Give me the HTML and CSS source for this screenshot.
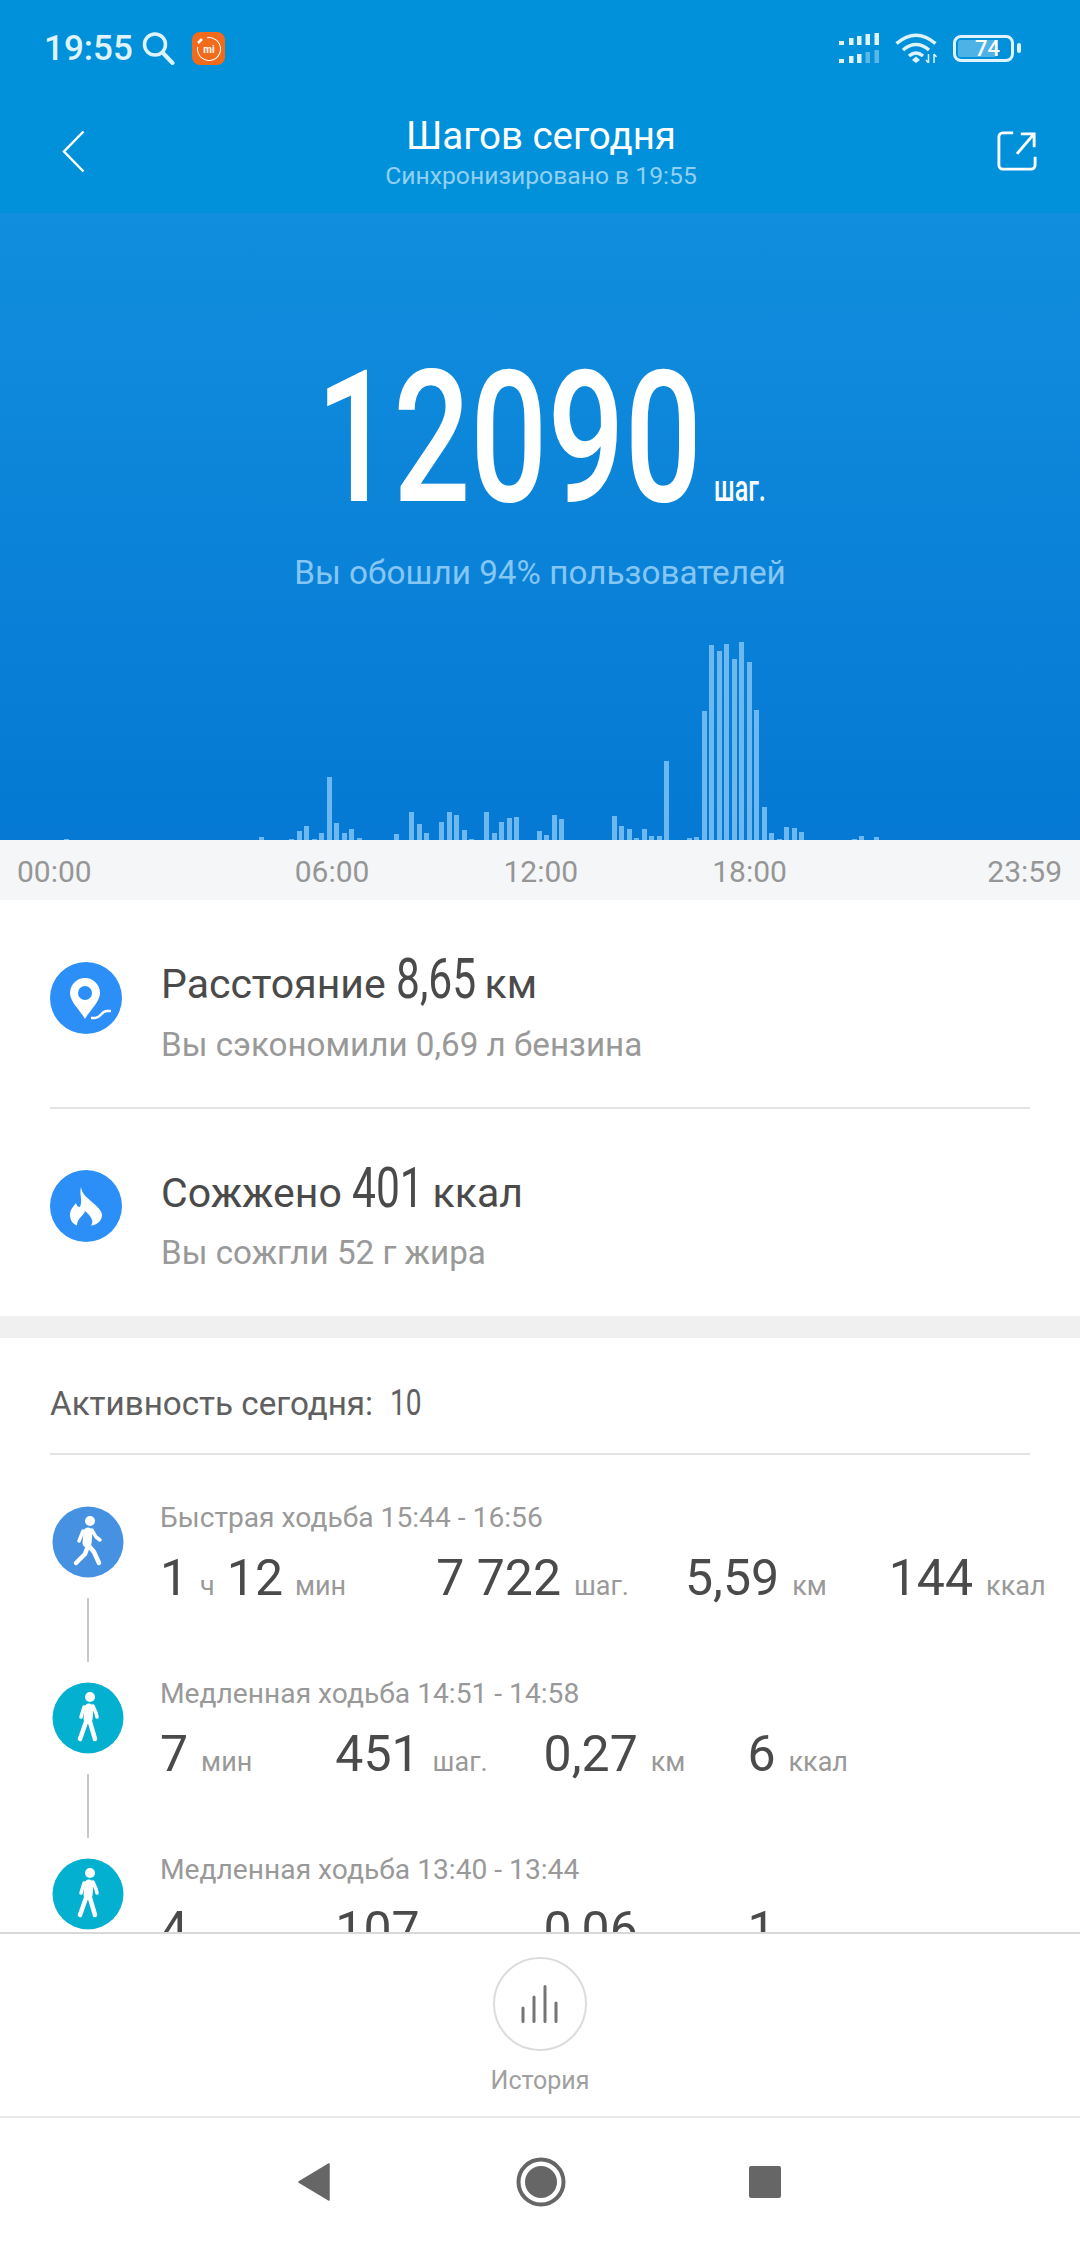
FILE: index.html
```html
<!DOCTYPE html>
<html lang="ru">
<head>
    <meta charset="UTF-8">
    <title>Шагов сегодня</title>
    <link rel="stylesheet" href="styles.css">
</head>
<body>
    <div class="top">
        <div class="status">
            <span class="clock">19:55</span>
            <svg class="search" width="33" height="33" viewBox="0 0 33 33"><circle cx="13" cy="12.500" r="10.500" fill="none" stroke="#dff3fe" stroke-width="3.500"/><path d="M21 21l9.500 10" stroke="#dff3fe" stroke-width="4" stroke-linecap="round"/></svg>
            <svg class="mi" width="33" height="33" viewBox="0 0 33 33"><rect width="33" height="33" rx="8" fill="#f26a1b"/><circle cx="17" cy="17" r="11.500" fill="none" stroke="#fff" stroke-width="1" stroke-dasharray="58 14" transform="rotate(-100 17 17)"/><path d="M6 11l4-4" stroke="#fff" stroke-width="2.500"/><text class="mi-text" x="17" y="20.500" text-anchor="middle">mi</text></svg>
            <span class="spacer"></span>
            <svg class="signal" width="40" height="30" viewBox="0 0 40 30"><g fill="#dff3fe"><rect x="0" y="8" width="5" height="4"/><rect x="10" y="5" width="4.500" height="7"/><rect x="18" y="3" width="4.500" height="9"/><rect x="26.500" y="1" width="4.500" height="11"/><rect x="35.500" y="0" width="4.500" height="12"/><rect x="0" y="26" width="5" height="4"/><rect x="10" y="23" width="4.500" height="7"/><rect x="18" y="21" width="4.500" height="9"/></g><g fill="#dff3fe" opacity=".4"><rect x="26.500" y="19" width="4.500" height="11"/><rect x="35.500" y="17" width="4.500" height="13"/></g></svg>
            <svg class="wifi" width="43" height="30" viewBox="0 0 43 30"><path d="M1.500 10.500Q21 -6 40.500 10.500M8 17Q21 6 34 17M14 23Q21 17 28 23" fill="none" stroke="#dff3fe" stroke-width="3.500"/><path d="M21 23.500l4 3.500-4 3-4-3z" fill="#dff3fe"/><path d="M33.500 21v9M39 21v9M31 27l2.500 3M41.500 24l-2.500-3" fill="none" stroke="#dff3fe" stroke-width="1.500"/></svg>
            <div class="battery"><div class="battery-level"></div><span>74</span></div>
            <div class="battery-cap"></div>
        </div>
        <div class="titlebar">
            <svg class="title-icon" width="24" height="43" viewBox="0 0 24 43"><path d="M22.500 1.500L3 21.500l19.500 20" fill="none" stroke="#fff" stroke-width="2.500"/></svg>
            <div class="title-text">
                <div class="title">Шагов сегодня</div>
                <div class="subtitle">Синхронизировано в 19:55</div>
            </div>
            <svg class="title-icon" width="40" height="40" viewBox="0 0 42 42"><path d="M17 2H6a4 4 0 0 0-4 4v30a4 4 0 0 0 4 4h30a4 4 0 0 0 4-4v-9M21 24L38 4M25 3h14v14" fill="none" stroke="#fff" stroke-width="3"/></svg>
        </div>
    </div>

    <div class="hero">
        <div class="steps"><span class="steps-num">12090</span><span class="steps-unit">шаг.</span></div>
        <div class="hero-note">Вы обошли 94% пользователей</div>
        <div class="chart">
            <i style="grid-column:10;height:1px"></i><i style="grid-column:36;height:3px"></i><i style="grid-column:40;height:1px"></i><i style="grid-column:41;height:9px"></i><i style="grid-column:42;height:14px"></i><i style="grid-column:43;height:1px"></i><i style="grid-column:44;height:7px"></i><i style="grid-column:45;height:63px"></i><i style="grid-column:46;height:17px"></i><i style="grid-column:47;height:7px"></i><i style="grid-column:48;height:11px"></i><i style="grid-column:49;height:2px"></i>
            <i style="grid-column:54;height:6px"></i><i style="grid-column:56;height:28px"></i><i style="grid-column:57;height:16px"></i><i style="grid-column:58;height:7px"></i><i style="grid-column:60;height:18px"></i><i style="grid-column:61;height:28px"></i><i style="grid-column:62;height:25px"></i><i style="grid-column:63;height:10px"></i><i style="grid-column:64;height:1px"></i><i style="grid-column:66;height:28px"></i><i style="grid-column:67;height:7px"></i><i style="grid-column:68;height:18px"></i><i style="grid-column:69;height:22px"></i><i style="grid-column:70;height:23px"></i>
            <i style="grid-column:73;height:9px"></i><i style="grid-column:74;height:5px"></i><i style="grid-column:75;height:25px"></i><i style="grid-column:76;height:21px"></i><i style="grid-column:83;height:24px"></i><i style="grid-column:84;height:14px"></i><i style="grid-column:85;height:11px"></i><i style="grid-column:86;height:2px"></i><i style="grid-column:87;height:11px"></i><i style="grid-column:88;height:4px"></i><i style="grid-column:89;height:4px"></i><i style="grid-column:90;height:79px"></i>
            <i style="grid-column:93;height:2px"></i><i style="grid-column:94;height:3px"></i><i style="grid-column:95;height:129px"></i><i style="grid-column:96;height:195px"></i><i style="grid-column:97;height:189px"></i><i style="grid-column:98;height:196px"></i><i style="grid-column:99;height:181px"></i><i style="grid-column:100;height:198px"></i><i style="grid-column:101;height:178px"></i><i style="grid-column:102;height:130px"></i><i style="grid-column:103;height:33px"></i><i style="grid-column:104;height:7px"></i><i style="grid-column:105;height:1px"></i><i style="grid-column:106;height:13px"></i><i style="grid-column:107;height:12px"></i><i style="grid-column:108;height:8px"></i>
            <i style="grid-column:115;height:1px"></i><i style="grid-column:116;height:4px"></i><i style="grid-column:118;height:3px"></i>
        </div>
    </div>

    <div class="axis">
        <span>00:00</span>
        <span class="axis-06">06:00</span>
        <span class="axis-mid">12:00</span>
        <span class="axis-mid">18:00</span>
        <span class="axis-end">23:59</span>
    </div>

    <div class="summary">
        <div class="sum-row">
            <svg class="sum-icon" width="72" height="72" viewBox="0 0 72 72"><circle cx="36" cy="36" r="36" fill="#2b8ff7"/><path fill-rule="evenodd" d="M35 16a15 15 0 0 0-15 15c0 9 10 17 15 26 5-9 15-17 15-26a15 15 0 0 0-15-15zm0 8a7 7 0 1 1 0 14 7 7 0 0 1 0-14z" fill="#fff"/><path d="M41 56h4c6 0 6-7 12-7h4" fill="none" stroke="#fff" stroke-width="2.500"/></svg>
            <div class="sum-text">
                <div class="sum-title">Расстояние <span class="sum-num num-dist">8,65</span> км</div>
                <div class="sum-note">Вы сэкономили 0,69 л бензина</div>
            </div>
        </div>
        <div class="sum-row sum-row-last">
            <svg class="sum-icon" width="72" height="72" viewBox="0 0 72 72"><circle cx="36" cy="36" r="36" fill="#2b8ff7"/><path d="M31 17C32 25 38 28 43 33 49 38 52 42 52 45 52 51 47 55 41 55.500 44 52 42 47 35 41 34 46 27 48 27 55.500 22 54 20 49 20 45 20 39 24 36 26 33 27 36 28 37 30 37 33 30 29 24 31 17z" fill="#fff"/></svg>
            <div class="sum-text">
                <div class="sum-title">Сожжено <span class="sum-num num-kcal">401</span> ккал</div>
                <div class="sum-note">Вы сожгли 52 г жира</div>
            </div>
        </div>
    </div>

    <div class="gap"></div>

    <div class="activity">
        <div class="act-head">Активность сегодня: &nbsp;<span class="act-count">10</span></div>

        <div class="act-list">
            <div class="act-item">
                <div class="act-side">
                    <svg width="72" height="72" viewBox="0 0 72 72"><circle cx="36" cy="36" r="35.500" fill="#4791e3"/><circle cx="38" cy="15" r="5" fill="#fff"/><g fill="none" stroke="#fff" stroke-linecap="round" stroke-linejoin="round"><path d="M36 26l-1 11" stroke-width="9"/><path d="M40 24l4 7 4 3M31 25l-4 10" stroke-width="3.500"/><path d="M36 40l-3 8-9 9M37 40l5 6 5 11" stroke-width="4.500"/></g></svg>
                    <div class="act-line"></div>
                </div>
                <div class="act-body">
                    <div class="act-label">Быстрая ходьба 15:44 - 16:56</div>
                    <div class="act-stats">
                        <div class="stat stat-time"><b>1</b><small>ч</small><b>12</b><small>мин</small></div>
                        <div class="stat stat-b"><b>7 722</b><small>шаг.</small></div>
                        <div class="stat"><b>5,59</b><small>км</small></div>
                        <div class="stat"><b>144</b><small>ккал</small></div>
                    </div>
                </div>
            </div>
            <div class="act-item">
                <div class="act-side">
                    <svg width="72" height="72" viewBox="0 0 72 72"><circle cx="36" cy="36" r="35.500" fill="#04b0cf"/><circle cx="38" cy="15" r="5" fill="#fff"/><g fill="none" stroke="#fff" stroke-linecap="round" stroke-linejoin="round"><path d="M37 26l-1 11" stroke-width="9"/><path d="M41 24l3 7 1 4M32 25l-3 10" stroke-width="3.500"/><path d="M34 40l-6 17M38 40l5 17" stroke-width="4.500"/></g></svg>
                    <div class="act-line"></div>
                </div>
                <div class="act-body">
                    <div class="act-label">Медленная ходьба 14:51 - 14:58</div>
                    <div class="act-stats">
                        <div class="stat stat-a"><b>7</b><small>мин</small></div>
                        <div class="stat stat-b"><b>451</b><small>шаг.</small></div>
                        <div class="stat"><b>0,27</b><small>км</small></div>
                        <div class="stat"><b>6</b><small>ккал</small></div>
                    </div>
                </div>
            </div>
            <div class="act-item">
                <div class="act-side">
                    <svg width="72" height="72" viewBox="0 0 72 72"><circle cx="36" cy="36" r="35.500" fill="#04b0cf"/><circle cx="38" cy="15" r="5" fill="#fff"/><g fill="none" stroke="#fff" stroke-linecap="round" stroke-linejoin="round"><path d="M37 26l-1 11" stroke-width="9"/><path d="M41 24l3 7 1 4M32 25l-3 10" stroke-width="3.500"/><path d="M34 40l-6 17M38 40l5 17" stroke-width="4.500"/></g></svg>
                </div>
                <div class="act-body">
                    <div class="act-label">Медленная ходьба 13:40 - 13:44</div>
                    <div class="act-stats">
                        <div class="stat stat-a"><b>4</b><small>мин</small></div>
                        <div class="stat stat-b"><b>107</b><small>шаг.</small></div>
                        <div class="stat"><b>0,06</b><small>км</small></div>
                        <div class="stat"><b>1</b><small>ккал</small></div>
                    </div>
                </div>
            </div>
        </div>
    </div>

    <div class="bottom">
        <div class="history-btn">
            <svg width="40" height="38" viewBox="0 0 40 38"><path d="M3 36.500V23M14 36.500V12M25 36.500V1.500M36 36.500V18" fill="none" stroke="#757575" stroke-width="3" stroke-linecap="round"/></svg>
        </div>
        <div class="history-label">История</div>
    </div>

    <div class="navbar">
        <svg class="nav-back" width="32" height="38" viewBox="0 0 32 38"><path d="M31 1v36L1 19z" fill="#666" stroke="#666" stroke-linejoin="round" stroke-width="1.500"/></svg>
        <svg width="50" height="50" viewBox="0 0 50 50"><circle cx="25" cy="25" r="22.500" fill="none" stroke="#666" stroke-width="4"/><circle cx="25" cy="25" r="16" fill="#666"/></svg>
        <div class="nav-square"></div>
    </div>
</body>
</html>
```

FILE: styles.css
```css
body {
    margin: 0;
    width: 1080px;
    height: 2246px;
    overflow: hidden;
    background-color: #fff;
    font-family: Roboto, "Noto Sans", sans-serif;
    color: #4a4a4a;
}
.top {
    height: 213px;
    background-color: #0091da;
    color: #fff;
}
.status {
    height: 96px;
    padding: 0 59px 0 44px;
    display: flex;
    align-items: center;
}
.clock {
    font-size: 35px;
    font-weight: 500;
    color: #dff3fe;
    width: 98px;
}
.search {
    margin-right: 17px;
}
.mi-text {
    font-size: 10px;
    font-weight: 700;
    fill: #fff;
}
.spacer {
    flex: 1;
}
.signal {
    margin-right: 16px;
}
.wifi {
    margin-right: 15px;
}
.battery {
    width: 61px;
    height: 27px;
    box-sizing: border-box;
    border: 3px solid #dff3fe;
    border-radius: 8px;
    display: flex;
    align-items: center;
    justify-content: flex-end;
    padding-right: 11px;
    position: relative;
    font-size: 22px;
    font-weight: 500;
    color: #fff;
}
.battery span {
    position: relative;
}
.battery-level {
    position: absolute;
    left: 2px;
    top: 2px;
    bottom: 2px;
    width: 38px;
    border-radius: 2px;
    background-color: rgba(255, 255, 255, 0.3);
}
.battery-cap {
    width: 4px;
    height: 10px;
    margin-left: 3px;
    border-radius: 2px;
    background-color: #dff3fe;
}
.titlebar {
    height: 117px;
    padding: 0 43px 0 61px;
    display: flex;
    align-items: center;
    justify-content: space-between;
}
.title-icon {
    margin-top: -7px;
}
.title-text {
    text-align: center;
    margin-top: -4px;
}
.title {
    font-size: 38.5px;
    line-height: 46px;
}
.subtitle {
    font-size: 24.7px;
    line-height: 34px;
    color: #92d0f2;
}
.hero {
    height: 627px;
    background: linear-gradient(#118ede, #0579d3);
    position: relative;
    display: flex;
    flex-direction: column;
    align-items: center;
}
.steps {
    align-self: flex-start;
    margin: 135px 0 0 316px;
    height: 180px;
    display: flex;
    align-items: baseline;
    color: #fff;
    line-height: 180px;
    white-space: nowrap;
}
.steps-num {
    display: block;
    width: 398px;
    font-size: 184px;
    font-weight: 500;
    transform: scaleX(0.738);
    transform-origin: left;
}
.steps-unit {
    display: block;
    font-size: 36px;
    font-weight: 500;
    transform: scaleX(0.7);
    transform-origin: left;
}
.hero-note {
    margin-top: 25px;
    font-size: 33.3px;
    color: #86c6f3;
}
.chart {
    position: absolute;
    left: -4.5px;
    bottom: 0;
    height: 200px;
    display: grid;
    grid-template-columns: repeat(145, 7.5px);
    grid-template-rows: 200px;
}
.chart i {
    display: block;
    grid-row: 1;
    align-self: end;
    justify-self: center;
    width: 5px;
    background-color: #6db8ee;
}
.axis {
    height: 60px;
    padding: 0 18px 0 17px;
    background-color: #f5f6f8;
    display: flex;
    font-size: 30px;
    line-height: 64px;
    color: #969696;
}
.axis-06 {
    margin-left: 203px;
}
.axis-mid {
    margin-left: 134px;
}
.axis-end {
    margin-left: auto;
}
.summary {
    padding: 0 50px;
}
.sum-row {
    height: 207px;
    display: flex;
    gap: 39px;
    border-bottom: 2px solid #e4e4e4;
}
.sum-row-last {
    border-bottom: 0;
}
.sum-icon {
    flex: none;
    margin-top: 62px;
}
.sum-row-last .sum-icon {
    margin-top: 61px;
}
.sum-text {
    padding-top: 49px;
}
.sum-title {
    font-size: 41px;
    line-height: 60px;
    color: #4a4a4a;
    white-space: nowrap;
}
.sum-num {
    display: inline-block;
    font-size: 56px;
    transform: scaleX(0.76);
    transform-origin: left;
}
.num-dist {
    margin-right: -27px;
}
.num-kcal {
    margin-right: -24px;
}
.sum-note {
    margin-top: 11px;
    font-size: 33.2px;
    color: #999;
}
.sum-row-last .sum-note {
    margin-top: 10px;
}
.gap {
    height: 22px;
    background-color: #f0f0f0;
}
.activity {
    height: 594px;
    padding: 0 50px;
    overflow: hidden;
}
.act-head {
    height: 115px;
    line-height: 130px;
    font-size: 33.2px;
    color: #606060;
    border-bottom: 2px solid #e4e4e4;
    white-space: nowrap;
}
.act-count {
    display: inline-block;
    font-size: 36px;
    transform: scaleX(0.78);
    transform-origin: left;
}
.act-list {
    padding-top: 51px;
}
.act-item {
    height: 176px;
    display: flex;
    gap: 36px;
}
.act-side {
    width: 72px;
    margin-left: 2px;
    display: flex;
    flex-direction: column;
    align-items: center;
}
.act-line {
    width: 2px;
    height: 64px;
    margin-top: 20px;
    background-color: #c8c8c8;
}
.act-body {
    flex: 1;
}
.act-label {
    margin-top: -6px;
    font-size: 28.2px;
    line-height: 36px;
    color: #999;
}
.act-stats {
    margin-top: 11px;
    display: flex;
    white-space: nowrap;
}
.stat {
    display: flex;
    align-items: baseline;
    margin-right: 62px;
}
.stat-time {
    margin-right: 90px;
}
.stat-a {
    margin-right: 83px;
}
.stat-b {
    margin-right: 56px;
}
.stat b {
    font-weight: 400;
    font-size: 50px;
    line-height: 62px;
    color: #4a4a4a;
}
.stat small {
    font-size: 27px;
    color: #999;
    margin-left: 13px;
}
.stat-time small {
    margin-left: 12px;
    margin-right: 12px;
}
.stat-time small:last-child {
    margin-right: 0;
}
.bottom {
    height: 184px;
    border-top: 2px solid #d8d8d8;
    box-sizing: border-box;
    display: flex;
    flex-direction: column;
    align-items: center;
}
.history-btn {
    margin-top: 23px;
    width: 94px;
    height: 94px;
    box-sizing: border-box;
    border: 2px solid #dcdcdc;
    border-radius: 50%;
    display: flex;
    align-items: center;
    justify-content: center;
}
.history-label {
    margin-top: 15px;
    font-size: 25px;
    color: #a0a0a0;
}
.navbar {
    height: 130px;
    padding-right: 2px;
    border-top: 2px solid #e8e8e8;
    box-sizing: border-box;
    display: flex;
    align-items: center;
    justify-content: center;
    gap: 185px;
}
.nav-back {
    margin-right: 1px;
}
.nav-square {
    width: 32px;
    height: 32px;
    margin-left: -2px;
    border-radius: 2px;
    background-color: #666;
}
```
